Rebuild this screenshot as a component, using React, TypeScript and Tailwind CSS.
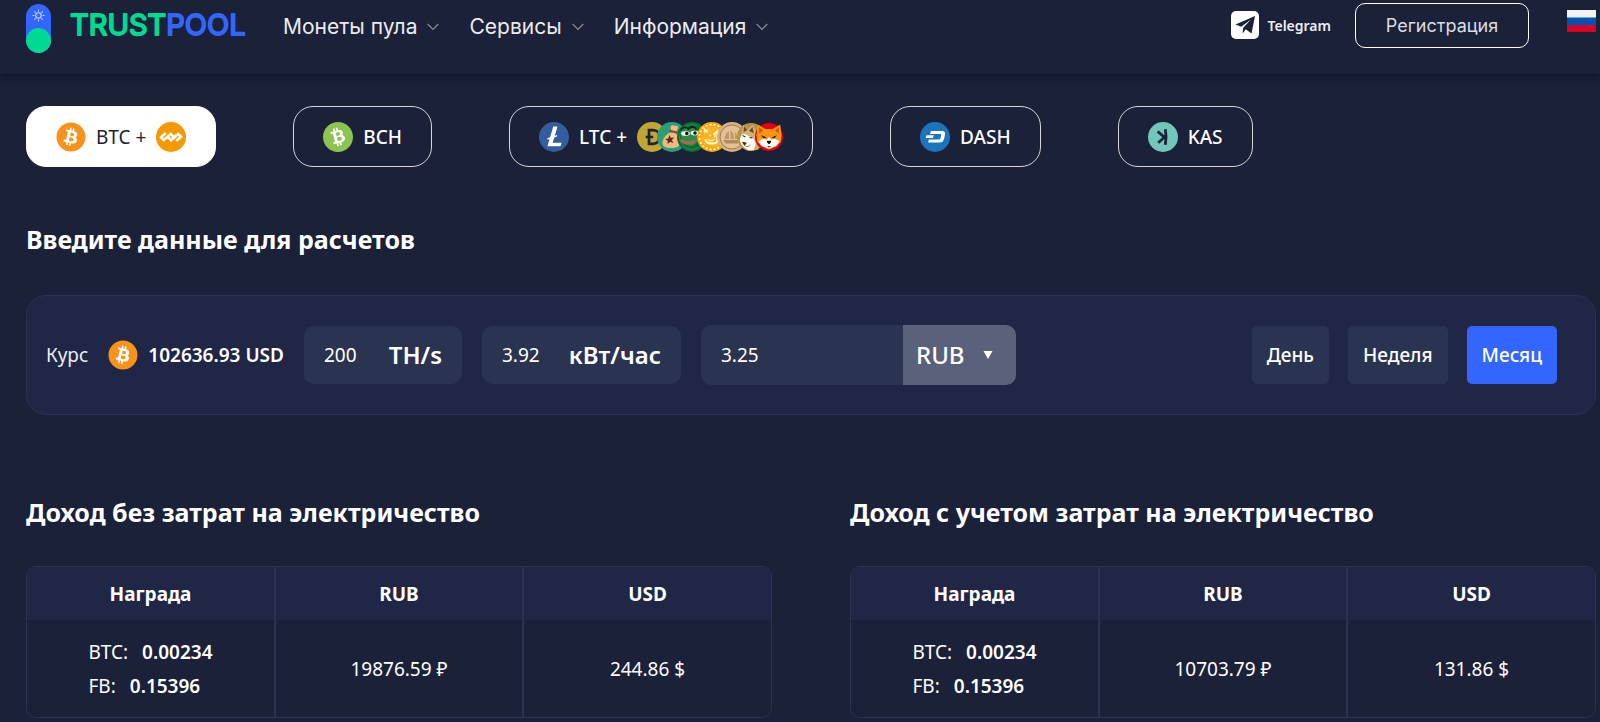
import { useState } from "react";
import type { ReactNode } from "react";
import { FaBitcoin } from "react-icons/fa";
import { SiBitcoincash, SiLitecoin } from "react-icons/si";

function Disc({ children, size = 30 }: { children: ReactNode; size?: number }) {
  return (
    <svg width={size} height={size} viewBox="0 0 30 30" className="shrink-0" aria-hidden="true">
      {children}
    </svg>
  );
}

function BtcIcon() {
  return (
    <Disc>
      <circle cx="15" cy="15" r="13" fill="#fff" />
      <FaBitcoin size={30} color="#f7931a" />
    </Disc>
  );
}

function BchIcon() {
  return (
    <Disc>
      <circle cx="15" cy="15" r="13" fill="#fff" />
      <SiBitcoincash size={30} color="#8dc351" />
    </Disc>
  );
}

function LtcIcon() {
  return (
    <Disc>
      <circle cx="15" cy="15" r="13" fill="#fff" />
      <SiLitecoin size={30} color="#345d9d" />
    </Disc>
  );
}

function FractalIcon() {
  return (
    <Disc>
      <circle cx="15" cy="15" r="15" fill="#f69802" />
      <g fill="none" stroke="#fff" strokeWidth="2.600" strokeLinejoin="miter">
        <path d="M9.800 11 5 15.300l2.800 2.700 7-6 3.200 3-3 3.200-2.600-2.600" />
        <path d="M20.200 19 25 14.700 22.200 12l-6.200 5.400M21 12.500l-4.500 4.500" />
      </g>
    </Disc>
  );
}

function DashIcon() {
  return (
    <Disc>
      <circle cx="15" cy="15" r="15" fill="#1c75bc" />
      <g fill="#fff">
        <path d="M11 9h11c2.600 0 3.500 1.300 3 3.500l-.8 3.800C23.600 19 22.300 20.600 19.500 20.600H8l.9-3h9.700c1 0 1.500-.4 1.800-1.400l.7-2.700c.2-1-.1-1.500-1.100-1.500H10z" />
        <path d="M6.500 13.300h7.300l-.9 2.800H5.600z" />
      </g>
    </Disc>
  );
}

function KasIcon() {
  return (
    <Disc>
      <circle cx="15" cy="15" r="15" fill="#70c7ba" />
      <g fill="none" stroke="#1a2138" strokeWidth="2.800">
        <path d="M17.300 7.200c1 5 1 10.500 0 15.600M16.800 15.500 9.600 9.400M17 14.800l-6.800 6" />
      </g>
    </Disc>
  );
}

function DogeIcon() {
  return (
    <Disc>
      <circle cx="15" cy="15" r="15" fill="#c2a633" />
      <path
        d="M12 8.200h4c9 0 9 13.600 0 13.600h-4zM8.700 15h7.500"
        fill="none"
        stroke="#1a2138"
        strokeWidth="2.700"
      />
    </Disc>
  );
}

function BagIcon() {
  return (
    <Disc>
      <circle cx="15" cy="15" r="15" fill="#2e9e78" />
      <path d="M14.500 3.500c3-1 4 1 6 .5 1.500 1-.5 4.500-1.500 6l-5-1.500c0-2-1-4 .5-5z" fill="#f3b97c" />
      <path d="M13 10.500c-4.500 2-7.500 6.500-7.500 10.500 0 4 4 5 8.500 5s9-1 9-5.500c0-4-2-8-5-9.500z" fill="#f3b97c" />
      <path d="m12.500 8.700 7.500 1.800" stroke="#8a5230" strokeWidth="2" />
      <path d="m12.500 13 1.300 2.800 3.200-.2-2 2.500 1.300 2.900-3.100-1-2.600 2v-3.200L8 17.100l3.200-.7z" fill="#5d2f25" />
    </Disc>
  );
}

function PepeIcon() {
  return (
    <Disc>
      <circle cx="15" cy="15" r="15" fill="#0d6b39" />
      <circle cx="15" cy="15" r="12.500" fill="none" stroke="#1d9350" strokeWidth="1" />
      <path d="M4 14c-1-6 4-10 8-8 4-3 9 0 9 4 2 5 0 12-6 14-6 0-10-4-11-10z" fill="#2f8c45" />
      <path d="M3.500 8.500c2-3.500 5-4 8-1.500 2-3 6.500-2.500 8 .5" fill="none" stroke="#082b1a" strokeWidth="1.800" />
      <ellipse cx="8.500" cy="11.500" rx="4.300" ry="2.300" fill="#fff" />
      <ellipse cx="17.500" cy="11" rx="4" ry="2.300" fill="#fff" />
      <circle cx="9.800" cy="11.500" r="1.800" fill="#111" />
      <circle cx="18" cy="11" r="1.800" fill="#111" />
      <path d="M3.500 16.500c4 3 10 3.500 14.500 1l.5 3.500c-5 2.500-11 2-15-1z" fill="#a5685a" />
    </Disc>
  );
}

function CatIcon() {
  return (
    <Disc>
      <circle cx="15" cy="15" r="15" fill="#f7a50c" />
      <circle cx="15" cy="15" r="12.500" fill="none" stroke="#fff3c9" strokeWidth="1.800" strokeDasharray="2 2" />
      <circle cx="15" cy="15" r="10.500" fill="#fdb31b" />
      <path
        d="M8 10.500V8l3 2M16.500 12.500l4-3V18c0 2-2 3.500-5.500 3.500S8.500 20 8.500 17"
        fill="none"
        stroke="#fff3d0"
        strokeWidth="2.200"
      />
      <path d="m12.500 13 1.500 1M17 14.500l2-.5M11.500 17.500c2 1.500 4.500 1 6-.5" stroke="#fff3d0" strokeWidth="1.500" fill="none" />
    </Disc>
  );
}

function ShipIcon() {
  return (
    <Disc>
      <circle cx="15" cy="15" r="15" fill="#d5b083" />
      <circle cx="15" cy="15" r="12" fill="#e2c195" stroke="#a37c4c" strokeWidth="1" />
      <path d="M6 18h17l-2.500 3.500h-12z" fill="#b58a5a" />
      <path d="M12 9c-3 2-4 4-4.500 8H12zM13.500 8v9H17c0-4-1-7-3.500-9zM18 10v7h3c-.5-3-1.500-5.500-3-7z" fill="#c09966" />
    </Disc>
  );
}

function HuskyIcon() {
  return (
    <Disc size={28}>
      <circle cx="15" cy="15" r="15" fill="#b9953c" />
      <path d="M7 1.500 11 7l6-5 3 7 3 6v13l-9 2c-6-1-10-6-11-12z" fill="#cdb27a" />
      <path d="M5 13c2-2 5-1 7 1l6 3 2 5-2 7h-6C6 26 3 21 3 17z" fill="#fffdf3" />
      <path d="M7.500 3.500 7 10l4-2.500zM16.500 4 13 8.500l5 2.500z" fill="#6b4d2b" />
      <path d="M6 13.500 9 15M13.500 15.500l3 .5M6.500 21l3 .5-1.500 2z" fill="#3b2b1c" stroke="#3b2b1c" strokeWidth="1.200" />
      <path d="M9 25c2 .5 4 0 5.500-1.500" fill="none" stroke="#8a6d4a" strokeWidth="1" />
    </Disc>
  );
}

function ShibaIcon() {
  return (
    <Disc size={28}>
      <circle cx="15" cy="15" r="15" fill="#e3000f" />
      <path d="M3 1.500 11 6.500h8L27 1.500l1.500 12-1 6.500-4.500 5-8 3.500L7 25l-4.500-5-1-6.500z" fill="#fd930f" />
      <path d="m4.500 4.500 4 3.500-4 3.500zM25.500 4.500l-4 3.500 4 3.500z" fill="#c9570a" />
      <path d="M3.500 19.500 9 17l3.500 1 2.500-3 2.500 3 3.500-1 5.500 2.500-3.500 5L15 27.500 7 24.500z" fill="#fff" />
      <path d="m6.500 13 6 2.500-3.500.8zM23.500 13l-6 2.500 3.500.8z" fill="#1b1b1b" />
      <path d="M12.500 19h5l-.8 2.500-1.700 1.300-1.700-1.300zM12.500 24.500l2.500.8 2.500-.8-2.500 2z" fill="#111" />
    </Disc>
  );
}

function Logo() {
  return (
    <a href="#" aria-label="TRUSTPOOL" className="flex items-center">
      <svg width="222" height="50" viewBox="0 0 222 50">
        <rect x="0" y="0" width="25" height="49" rx="12.500" fill="#3366ff" />
        <circle cx="12.500" cy="36.500" r="12.500" fill="#00d991" />
        <g fill="none" stroke="#c9d7ff" strokeWidth="1.100">
          <circle cx="12.500" cy="11.500" r="2.700" />
          <path d="M12.500 5.500v2M12.500 15.500v2M6.500 11.500h2M16.500 11.500h2M8.300 7.300l1.400 1.400M15.300 14.300l1.400 1.400M8.300 15.700l1.400-1.400M15.300 8.700l1.400-1.400" />
        </g>
        <text
          x="44"
          y="31"
          fontSize="29"
          strokeWidth="1.800"
          strokeLinejoin="round"
          className="font-['Inter',sans-serif] font-normal"
        >
          <tspan fill="#00d991" stroke="#00d991">TRUST</tspan>
          <tspan fill="#3366ff" stroke="#3366ff">POOL</tspan>
        </text>
      </svg>
    </a>
  );
}

function NavItem({ label }: { label: string }) {
  return (
    <button type="button" className="flex items-center gap-[10px] text-[21px] leading-7 text-[#ececef]">
      {label}
      <svg width="12" height="8" viewBox="0 0 12 8" fill="none" stroke="#8a8d94" strokeWidth="1.200" aria-hidden="true">
        <path d="m.7 1 5.300 5.400L11.300 1" />
      </svg>
    </button>
  );
}

function Header() {
  return (
    <header className="flex h-[74px] items-start pr-1 pl-[26px] font-['Inter','Noto_Sans',sans-serif] shadow-[0_2px_8px_rgba(8,10,26,0.6)]">
      <div className="flex h-[53px] items-center pt-1">
        <Logo />
      </div>
      <nav className="ml-[35px] flex h-[53px] items-center gap-[30px]">
        <NavItem label="Монеты пула" />
        <NavItem label="Сервисы" />
        <NavItem label="Информация" />
      </nav>
      <div className="ml-auto flex h-[50px] items-center">
        <a href="#" className="flex items-center gap-2 text-[14px] font-semibold text-[#ececef]">
          <svg width="28" height="28" viewBox="0 0 28 28" aria-hidden="true">
            <rect width="28" height="28" rx="5" fill="#fff" />
            <path d="M24 5 4.500 13.500l5.700 2.300L20 8.500l-7.800 8.300-.7 5.700 3.300-4.200 5.700 4.200z" fill="#1a2138" />
          </svg>
          <span className="font-['Noto_Sans',sans-serif]">Telegram</span>
        </a>
        <button
          type="button"
          className="ml-6 h-[45px] w-[174px] rounded-[10px] border border-white text-[18px] text-[#dddde1]"
        >
          Регистрация
        </button>
        <button type="button" aria-label="Русский" className="ml-[38px]">
          <svg width="29" height="22" viewBox="0 0 29 22" className="mb-2 block">
            <rect width="29" height="8" fill="#f3f3f3" />
            <rect y="7.500" width="29" height="7.500" fill="#0052b4" />
            <rect y="15" width="29" height="7" fill="#d80027" />
          </svg>
        </button>
      </div>
    </header>
  );
}

const coins: { name: string; icon: ReactNode; extra?: ReactNode }[] = [
  { name: "BTC +", icon: <BtcIcon />, extra: <FractalIcon /> },
  { name: "BCH", icon: <BchIcon /> },
  {
    name: "LTC +",
    icon: <LtcIcon />,
    extra: (
      <span className="flex items-center -space-x-[10px]">
        <DogeIcon />
        <BagIcon />
        <PepeIcon />
        <CatIcon />
        <ShipIcon />
        <HuskyIcon />
        <ShibaIcon />
      </span>
    ),
  },
  { name: "DASH", icon: <DashIcon /> },
  { name: "KAS", icon: <KasIcon /> },
];

function CoinTabs() {
  const [active, setActive] = useState("BTC +");
  return (
    <div className="flex flex-wrap gap-x-[77px] gap-y-4">
      {coins.map((coin) => (
        <button
          key={coin.name}
          type="button"
          aria-pressed={coin.name === active}
          onClick={() => setActive(coin.name)}
          className={
            coin.name === active
              ? "flex h-[61px] items-center gap-[10px] rounded-[20px] border border-white bg-white px-[29px] text-[19px] text-[#1a2138]"
              : "flex h-[61px] items-center gap-[10px] rounded-[20px] border border-[#d6d6da] px-[29px] text-[19px] font-medium text-white"
          }
        >
          {coin.icon}
          <span className="pt-[2px]">{coin.name}</span>
          {coin.extra}
        </button>
      ))}
    </div>
  );
}

const periods = ["День", "Неделя", "Месяц"];

function Calculator() {
  const [period, setPeriod] = useState("Месяц");
  return (
    <form className="flex h-[120px] items-center rounded-[20px] border border-[#2a3350] bg-[#202645] pr-[38px] pl-[19px] text-[19px] text-white">
      <span className="text-[#ececef]">Курс</span>
      <span className="ml-5 flex items-center gap-[10px] font-semibold">
        <BtcIcon />
        102636.93 USD
      </span>
      <label className="ml-5 flex h-[58px] w-[158px] items-center justify-between rounded-[10px] bg-[#2a3350] px-5">
        <input defaultValue="200" className="w-14 bg-transparent outline-none" />
        <span className="text-[24px] font-semibold">TH/s</span>
      </label>
      <label className="ml-5 flex h-[58px] w-[199px] items-center justify-between rounded-[10px] bg-[#2a3350] px-5">
        <input defaultValue="3.92" className="w-14 bg-transparent outline-none" />
        <span className="text-[24px] font-semibold">кВт/час</span>
      </label>
      <div className="ml-5 flex h-[60px] w-[315px] overflow-hidden rounded-[10px] bg-[#2a3350]">
        <input defaultValue="3.25" aria-label="Стоимость" className="w-0 grow bg-transparent px-5 outline-none" />
        <div className="relative w-[113px]">
          <select
            aria-label="Валюта"
            className="h-full w-full appearance-none bg-[#5a617a] pl-[13px] text-[24px] font-medium outline-none"
          >
            <option>RUB</option>
            <option>USD</option>
          </select>
          <svg
            width="10"
            height="8"
            viewBox="0 0 10 8"
            className="pointer-events-none absolute top-[26px] right-[23px]"
            aria-hidden="true"
          >
            <path d="M.5 0h9L5 8z" fill="#fff" />
          </svg>
        </div>
      </div>
      <div className="ml-auto flex gap-[19px]">
        {periods.map((name) => (
          <button
            key={name}
            type="button"
            aria-pressed={name === period}
            onClick={() => setPeriod(name)}
            className={
              name === period
                ? "h-[58px] rounded-[5px] bg-[#3366ff] px-[15px] font-medium"
                : "h-[58px] rounded-[5px] bg-[#2a3350] px-[15px] font-medium"
            }
          >
            {name}
          </button>
        ))}
      </div>
    </form>
  );
}

function Income({ title, rub, usd }: { title: string; rub: string; usd: string }) {
  return (
    <section>
      <h2 className="text-[25px] leading-8 font-bold">{title}</h2>
      <div className="mt-[38px] overflow-hidden rounded-[10px] border border-[#2a3350]">
        <table className="w-full table-fixed border-collapse text-center text-[19px]">
          <thead className="bg-[#202645]">
            <tr className="h-[53px] divide-x-2 divide-[#2a3350]">
              <th className="pt-[2px] font-bold">Награда</th>
              <th className="pt-[2px] font-bold">RUB</th>
              <th className="pt-[2px] font-bold">USD</th>
            </tr>
          </thead>
          <tbody>
            <tr className="h-[97px] divide-x-2 divide-[#2a3350]">
              <td>
                <div className="inline-block text-left leading-[34px]">
                  <div className="flex gap-[14px]">
                    BTC:<span className="font-semibold">0.00234</span>
                  </div>
                  <div className="flex gap-[14px]">
                    FB:<span className="font-semibold">0.15396</span>
                  </div>
                </div>
              </td>
              <td className="pt-[2px]">{rub} ₽</td>
              <td className="pt-[2px]">{usd} $</td>
            </tr>
          </tbody>
        </table>
      </div>
    </section>
  );
}

export default function App() {
  return (
    <div className="min-h-screen bg-[#1a2138] font-['Noto_Sans',sans-serif] text-white">
      <Header />
      <main className="pt-8 pr-1 pl-[26px]">
        <CoinTabs />
        <h1 className="mt-14 mb-10 text-[25px] leading-8 font-bold">Введите данные для расчетов</h1>
        <Calculator />
        <div className="mt-[81px] grid grid-cols-2 gap-[78px]">
          <Income title="Доход без затрат на электричество" rub="19876.59" usd="244.86" />
          <Income title="Доход с учетом затрат на электричество" rub="10703.79" usd="131.86" />
        </div>
      </main>
    </div>
  );
}
